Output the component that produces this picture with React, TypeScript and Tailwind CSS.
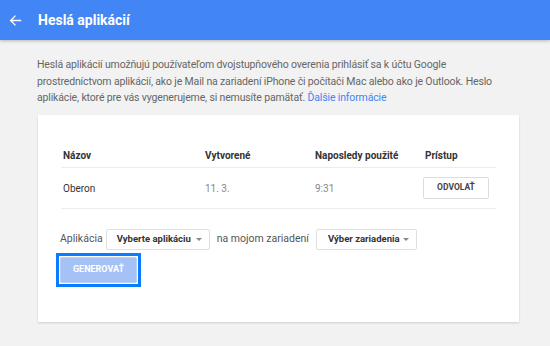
export default function App() {
  return (
    <div className="w-[550px] h-[346px] overflow-hidden bg-[#f2f2f2] font-['Roboto',sans-serif]">
      {/* Top bar */}
      <div className="relative z-10 h-10 bg-[#4285f4] flex items-center shadow-[0_1px_3px_rgba(0,0,0,0.25)]">
        <svg className="ml-[9px] w-[13px] h-[13px]" viewBox="0 0 16 16" fill="none" stroke="white" strokeWidth="1.6">
          <path d="M15 8H2M8 2L2 8l6 6" />
        </svg>
        <h1 className="ml-4 text-[14px] font-bold text-white">Heslá aplikácií</h1>
      </div>

      {/* Intro */}
      <p className="mt-[17px] ml-[37px] mr-[30px] text-[10.5px] tracking-[-0.15px] leading-[16.5px] text-[#666] whitespace-nowrap">
        Heslá aplikácií umožňujú používateľom dvojstupňového overenia prihlásiť sa k účtu Google
        <br />
        prostredníctvom aplikácií, ako je Mail na zariadení iPhone či počítači Mac alebo ako je Outlook. Heslo
        <br />
        aplikácie, ktoré pre vás vygenerujeme, si nemusíte pamätať. <span className="text-[#4285f4]">Ďalšie informácie</span>
      </p>

      {/* Card */}
      <div className="mt-[8px] ml-[38px] w-[481px] h-[207px] bg-white shadow-[0_1px_2px_rgba(0,0,0,0.15)] pt-[33px] px-[23px]">
        <div className="grid grid-cols-[142px_110px_110px_1fr] text-[10px] text-[#333] font-bold border-b border-[#ececec] h-[20px] items-start">
          <div className="pl-0.5">Názov</div>
          <div className="pl-0.5">Vytvorené</div>
          <div className="pl-0.5">Naposledy použité</div>
          <div className="pl-0.5">Prístup</div>
        </div>
        <div className="grid grid-cols-[142px_110px_110px_1fr] text-[10px] border-b border-[#ececec] h-[41px] items-center">
          <div className="pl-0.5 pt-[2px] text-[#333]">Oberon</div>
          <div className="pl-0.5 pt-[2px] text-[#888]">11. 3.</div>
          <div className="pl-0.5 pt-[2px] text-[#888]">9:31</div>
          <div>
            <button className="w-[66px] h-[22px] border border-[#dcdcdc] rounded-[2px] text-[8.5px] font-bold text-[#444] bg-white">
              ODVOLAŤ
            </button>
          </div>
        </div>

        <div className="mt-5 flex items-center text-[10.5px] text-[#555] whitespace-nowrap">
          <span className="-ml-[1px]">Aplikácia</span>
          <div className="ml-[3px] w-[104px] h-[21px] border border-[#e0e0e0] rounded-[2px] flex items-center justify-between pl-[10px] pr-[7px] text-[9.5px] font-bold text-[#333]">
            Vyberte aplikáciu
            <span className="w-0 h-0 border-x-[3px] border-x-transparent border-t-[3px] border-t-[#888]" />
          </div>
          <span className="ml-[7px]">na mojom zariadení</span>
          <div className="ml-[7px] w-[101px] h-[21px] border border-[#e0e0e0] rounded-[2px] flex items-center justify-between pl-[11px] pr-[7px] text-[9.5px] font-bold text-[#333]">
            Výber zariadenia
            <span className="w-0 h-0 border-x-[3px] border-x-transparent border-t-[3px] border-t-[#888]" />
          </div>
        </div>

        <div className="mt-[3px] -ml-[5px] w-[85px] h-[34px] border-[3px] border-[#0a7cff] p-[1px] flex">
          <button className="flex-1 bg-[#a4c2f6] border border-[#b9d0f8] rounded-[2px] text-[9px] font-bold text-white">
            GENEROVAŤ
          </button>
        </div>
      </div>
    </div>
  );
}
